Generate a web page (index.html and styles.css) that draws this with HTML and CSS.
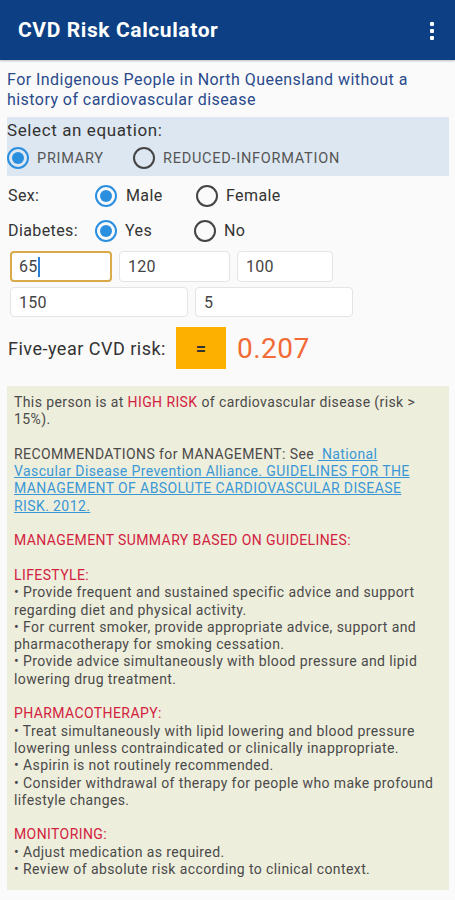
FILE: index.html
```html
<!DOCTYPE html>
<html>
<head>
<meta charset="utf-8">
<link rel="stylesheet" href="styles.css">
</head>
<body>
<header class="appbar">
  <div class="title">CVD Risk Calculator</div>
  <div class="menu"><span></span><span></span><span></span></div>
</header>
<p class="subtitle">For Indigenous People in North Queensland without a history of cardiovascular disease</p>
<section class="equation">
  <div class="eq-label">Select an equation:</div>
  <div class="eq-options">
    <label class="opt opt-primary"><span class="radio checked"></span><span class="caps">PRIMARY</span></label>
    <label class="opt"><span class="radio"></span><span class="caps">REDUCED-INFORMATION</span></label>
  </div>
</section>
<div class="row">
  <div class="row-label">Sex:</div>
  <label class="opt opt-a"><span class="radio checked"></span><span>Male</span></label>
  <label class="opt"><span class="radio"></span><span>Female</span></label>
</div>
<div class="row">
  <div class="row-label">Diabetes:</div>
  <label class="opt opt-b"><span class="radio checked"></span><span>Yes</span></label>
  <label class="opt"><span class="radio"></span><span>No</span></label>
</div>
<div class="inputs inputs-1">
  <div class="field focused f1">65<span class="caret"></span></div>
  <div class="field f2">120</div>
  <div class="field f3">100</div>
</div>
<div class="inputs inputs-2">
  <div class="field f4">150</div>
  <div class="field f5">5</div>
</div>
<div class="risk">
  <div class="risk-label">Five-year CVD risk:</div>
  <button class="equals">=</button>
  <div class="risk-value">0.207</div>
</div>
<section class="panel">
  <p>This person is at <span class="red">HIGH RISK</span> of cardiovascular disease (risk &gt; 15%).</p>
  <p>RECOMMENDATIONS for MANAGEMENT: See <a class="link">&nbsp;National Vascular Disease Prevention Alliance. GUIDELINES FOR THE MANAGEMENT OF ABSOLUTE CARDIOVASCULAR DISEASE RISK. 2012.</a></p>
  <p class="red">MANAGEMENT SUMMARY BASED ON GUIDELINES:</p>
  <p><span class="red">LIFESTYLE:</span><br>• Provide frequent and sustained specific advice and support regarding diet and physical activity.<br>• For current smoker, provide appropriate advice, support and pharmacotherapy for smoking cessation.<br>• Provide advice simultaneously with blood pressure and lipid lowering drug treatment.</p>
  <p><span class="red">PHARMACOTHERAPY:</span><br>• Treat simultaneously with lipid lowering and blood pressure lowering unless contraindicated or clinically inappropriate.<br>• Aspirin is not routinely recommended.<br>• Consider withdrawal of therapy for people who make profound lifestyle changes.</p>
  <p><span class="red">MONITORING:</span><br>• Adjust medication as required.<br>• Review of absolute risk according to clinical context.</p>
</section>
</body>
</html>
```
FILE: styles.css
```css
* { box-sizing: border-box; }
html, body { margin: 0; padding: 0; }
body {
  background: #fafafa;
  font-family: Roboto, "Liberation Sans", sans-serif;
  color: #333;
  width: 455px;
  height: 900px;
  overflow: hidden;
}
.appbar {
  height: 60px;
  background: #0c3f83;
  display: flex;
  align-items: center;
  justify-content: space-between;
  padding: 0 18px 0 18px;
  box-shadow: 0 1px 2px rgba(0,0,0,0.25);
}
.title {
  color: #fff;
  font-size: 21px;
  font-weight: 700;
  letter-spacing: 0.6px;
}
.menu {
  display: flex;
  flex-direction: column;
  gap: 3px;
  margin-right: 3px;
  padding-top: 2px;
}
.menu span {
  width: 4px;
  height: 4px;
  background: #fff;
  border-radius: 1px;
}
.subtitle {
  margin: 0;
  padding: 10px 7px 0;
  font-size: 16px;
  line-height: 20px;
  letter-spacing: 0.45px;
  color: #2a4a8c;
}
.equation {
  margin: 7px 6px 0 7px;
  background: #dde7f1;
  padding: 2px 0 3px 0;
}
.eq-label {
  font-size: 17px;
  line-height: 22px;
  letter-spacing: 0.6px;
  color: #333;
}
.eq-options {
  display: flex;
  align-items: center;
  height: 30px;
  margin-top: 2px;
}
.opt {
  display: flex;
  align-items: center;
  gap: 8px;
  font-size: 16px;
  letter-spacing: 0.4px;
  color: #333;
}
.opt-primary { width: 126px; }
.caps { font-size: 14.5px; color: #555; letter-spacing: 0.75px; }
.radio {
  width: 22px;
  height: 22px;
  border-radius: 50%;
  border: 2px solid #444;
  display: inline-flex;
  align-items: center;
  justify-content: center;
  flex: none;
}
.radio.checked { border-color: #2b8fe0; }
.radio.checked::after {
  content: "";
  width: 12px;
  height: 12px;
  border-radius: 50%;
  background: #2b8fe0;
}
.row {
  display: flex;
  align-items: center;
  height: 35px;
  padding-left: 8px;
}
.row:first-of-type { margin-top: 2px; }
.row-label {
  width: 87px;
  font-size: 16px;
  letter-spacing: 0.4px;
  color: #333;
}
.opt-a { width: 101px; gap: 9px; }
.opt-b { width: 99px; gap: 8px; }
.inputs {
  display: flex;
  gap: 7px;
  padding-left: 10px;
}
.inputs-1 { margin-top: 3px; }
.inputs-2 { margin-top: 5px; }
.field {
  height: 31px;
  background: #fff;
  border: 1px solid #e4e4e4;
  border-radius: 4px;
  font-size: 16px;
  letter-spacing: 0.3px;
  color: #444;
  display: flex;
  align-items: center;
  padding-left: 8px;
}
.inputs-2 .field { height: 30px; }
.focused { border: 2px solid #d9a94a; padding-left: 7px; }
.caret {
  width: 2px;
  height: 20px;
  background: #2b7fd6;
}
.f1 { width: 102px; }
.f2 { width: 111px; }
.f3 { width: 96px; }
.f4 { width: 178px; }
.f5 { width: 158px; }
.risk {
  display: flex;
  align-items: center;
  margin-top: 10px;
  padding-left: 8px;
}
.risk-label {
  font-size: 18px;
  letter-spacing: 0.5px;
  color: #333;
  width: 168px;
}
.equals {
  width: 50px;
  height: 42px;
  background: #fdb000;
  border: none;
  font-family: Roboto, "Liberation Sans", sans-serif;
  font-size: 18px;
  font-weight: 700;
  color: #333;
  padding: 0;
}
.risk-value {
  margin-left: 11px;
  font-size: 28px;
  letter-spacing: 0.5px;
  color: #f26a35;
}
.panel {
  margin: 17px 6px 0 7px;
  background: #eeeedc;
  padding: 8px 13px 12px 7px;
  font-size: 14px;
  line-height: 17.3px;
  letter-spacing: 0.4px;
  color: #4a4a4a;
}
.panel p { margin: 0 0 17.3px 0; }
.panel p:last-child { margin-bottom: 0; }
.red { color: #d2223f; }
.link { color: #3a98d6; text-decoration: underline; }
```
